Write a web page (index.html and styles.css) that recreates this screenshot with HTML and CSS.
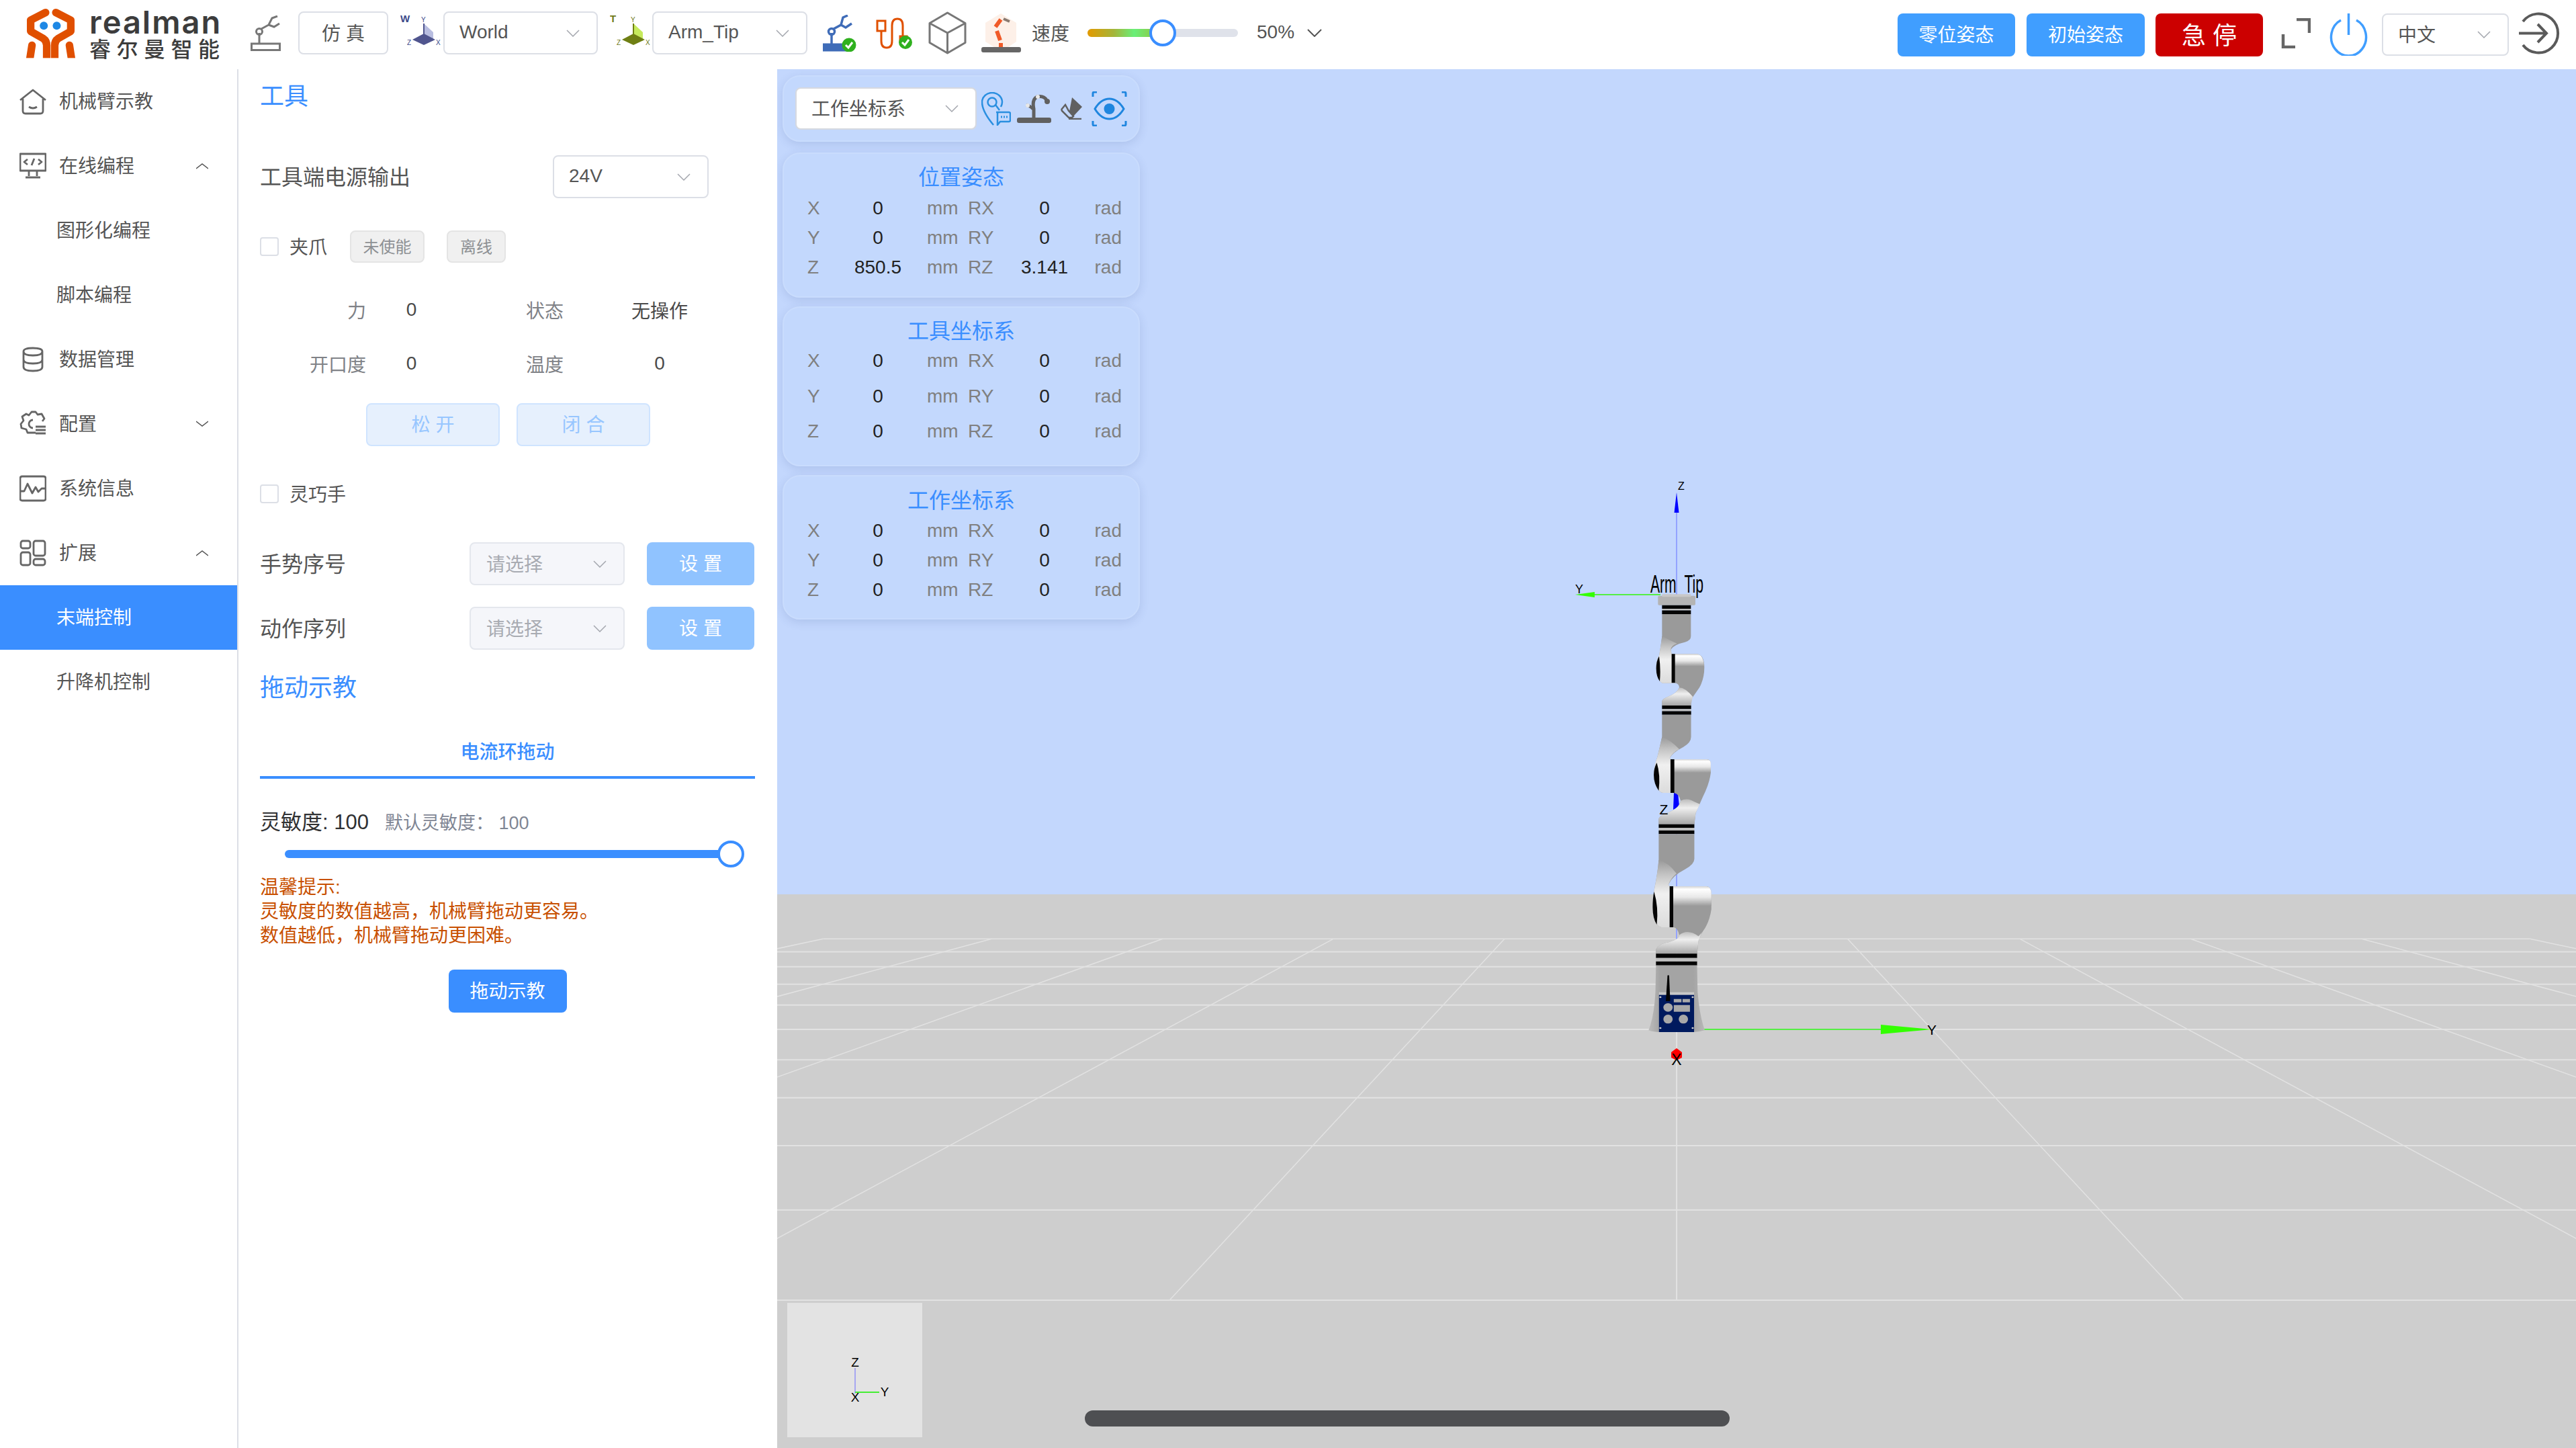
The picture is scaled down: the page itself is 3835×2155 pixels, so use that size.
FILE: index.html
```html
<!DOCTYPE html>
<html lang="zh-CN">
<head>
<meta charset="utf-8">
<title>realman</title>
<link rel="stylesheet" href="styles.css">
</head>
<body>
<div class="app">
  <header class="topbar">
    <div class="logo">
      <svg class="logo-mark" viewBox="40 15 250 232" width="83" height="77">
        <g class="logo-stroke">
          <path d="M145 38L78 72V122L135 155Q150 165 150 185V262"/>
          <path d="M191 38L258 72V122L201 155Q186 165 186 185V262"/>
          <path d="M84 185L72 262"/>
          <path d="M252 185L264 262"/>
        </g>
        <circle class="logo-eye" cx="137" cy="97" r="18"/>
        <circle class="logo-eye" cx="195" cy="97" r="18"/>
        <rect class="logo-cut" x="30" y="242" width="270" height="30"/>
      </svg>
      <div class="logo-text">
        <span class="logo-en">realman</span>
        <span class="logo-cn">睿尔曼智能</span>
      </div>
    </div>

    <svg class="ml45" width="45" height="53" viewBox="0 0 45 53"><g class="ico-gray"><rect x="1.5" y="42" width="42" height="9.5"/><path d="M13 26V42"/><circle cx="13" cy="24" r="4.5"/><path d="M16 20L27 14L32 4L40 1M27 14L35 17L43 12"/></g></svg>
    <div class="select select-sim ml26"><span>仿 真</span></div>

    <svg class="ml18 frame-ico" width="61" height="53" viewBox="0 -3 61 53"><text class="frame-letter navy" x="0" y="12">W</text><path class="f-light" d="M35 14L49 27V40L35 32Z"/><path class="f-navy" d="M35 29L52 38L35 46L18 38Z"/><path class="line-navy" d="M35 14V32"/><text class="frame-axis navy" x="31" y="12">Y</text><text class="frame-axis navy" x="53" y="46">X</text><text class="frame-axis navy" x="10" y="46">Z</text></svg>
    <div class="select select-frame ml3"><span>World</span><svg class="chev" width="20" height="11" viewBox="0 0 20 11"><path d="M1 1L10 10L19 1"/></svg></div>

    <svg class="ml18 frame-ico" width="61" height="53" viewBox="0 -3 61 53"><text class="frame-letter olive" x="0" y="12">T</text><path class="f-lime" d="M35 14L49 27V40L35 32Z"/><path class="f-olive" d="M35 29L52 38L35 46L18 38Z"/><path class="line-olive" d="M35 14V32"/><text class="frame-axis olive" x="31" y="12">Y</text><text class="frame-axis olive" x="53" y="46">X</text><text class="frame-axis olive" x="10" y="46">Z</text></svg>
    <div class="select select-frame select-tip ml2"><span>Arm_Tip</span><svg class="chev" width="20" height="11" viewBox="0 0 20 11"><path d="M1 1L10 10L19 1"/></svg></div>

    <svg class="ml23" width="50" height="55" viewBox="0 0 50 55"><g class="ico-blue"><rect x="1.5" y="44" width="36" height="9"/><path d="M13 27V44"/><circle cx="13" cy="25" r="4.5"/><path d="M16 21L27 15L30 4L37 1M27 15L34 19L43 13"/></g><circle class="ok" cx="39" cy="45" r="10.5"/><path class="ok-tick" d="M34 45L38 49L44 41"/></svg>
    <svg class="ml29" width="55" height="47" viewBox="0 0 55 47"><g class="ico-orange"><rect x="2" y="5" width="12" height="15"/><path d="M8 20V35Q8 45 16 45Q24 45 24 35V12Q24 2 32 2Q40 2 40 12V30"/><rect x="36" y="28" width="10" height="8"/></g><circle class="ok" cx="44" cy="37" r="10"/><path class="ok-tick" d="M39 37L43 41L49 33"/></svg>
    <svg class="ml23" width="57" height="64" viewBox="0 0 57 64"><path class="ico-cube" d="M28.500 2L55 17.500V46.500L28.500 62L2 46.500V17.500ZM2 17.500L28.500 32L55 17.500M28.500 32V62"/></svg>
    <svg class="ml22" width="59" height="58" viewBox="0 0 59 58"><path class="speed-shield" d="M29 0L52 14V42L40 50H19L6 42V14Z"/><g class="speed-arm"><path d="M29 9L21 20"/><path d="M23 26L28 40"/><path d="M29 44V50"/></g><path class="speed-tip" d="M33 8L42 12"/><rect class="speed-base" x="0" y="50" width="59" height="8" rx="3"/></svg>
    <span class="top-text ml16">速度</span>
    <div class="speed ml27"><div class="speed-fill"></div><div class="speed-handle"></div></div>
    <span class="top-text ml28">50%</span>
    <svg class="chev chev-dark ml19" width="22" height="12" viewBox="0 0 22 12"><path d="M1 1L11 11L21 1"/></svg>

    <div class="top-right">
      <button class="btn-top">零位姿态</button>
      <button class="btn-top btn-init">初始姿态</button>
      <button class="btn-stop">急 停</button>
      <svg class="ml26" width="45" height="45" viewBox="0 0 45 45"><path class="ico-expand" d="M24 2H43V22M4 24V43H22"/></svg>
      <svg class="ml28 nudge" width="57" height="63" viewBox="0 0 57 63"><path class="ico-power" d="M17 10A26 28 0 1 0 40 10M28.500 0V32"/></svg>
      <div class="select select-lang ml21 nudge"><span>中文</span><svg class="chev" width="20" height="11" viewBox="0 0 20 11"><path d="M1 1L10 10L19 1"/></svg></div>
      <svg class="ml13" width="63" height="63" viewBox="0 0 63 63"><path class="ico-logout" d="M8 14A29 29 0 1 1 8 49M2 31.500H42M30 18L43 31.500L30 45"/></svg>
    </div>
  </header>

  <div class="main">
    <nav class="sidebar">
      <a class="nav-item"><svg class="nav-ico" viewBox="0 0 40 40"><path d="M1 18L20 3L39 18M5 16V34Q5 38 9 38H31Q35 38 35 34V16M14 28Q20 32 26 28"/></svg><span>机械臂示教</span></a>
      <a class="nav-item"><svg class="nav-ico" viewBox="0 0 40 40"><path d="M1 2H39V27H1ZM12 10L7 14L12 18M28 10L33 14L28 18M22 9L18 19M14 27V35M26 27V35M9 37H31"/></svg><span>在线编程</span><svg class="nav-arrow" viewBox="0 0 18 10"><path d="M0 9L9 2L18 9"/></svg></a>
      <a class="nav-item nav-sub"><span>图形化编程</span></a>
      <a class="nav-item nav-sub"><span>脚本编程</span></a>
      <a class="nav-item"><svg class="nav-ico" viewBox="0 0 40 40"><path d="M6 8Q6 3 20 3Q34 3 34 8V31Q34 37 20 37Q6 37 6 31ZM6 8Q6 14 20 14Q34 14 34 8M6 20Q6 26 20 26Q34 26 34 20"/></svg><span>数据管理</span></a>
      <a class="nav-item"><svg class="nav-ico" viewBox="0 0 40 40"><path d="M24 33H12L10 28L3 26L2 20L6 15L4 9L10 5L14 7L18 2H24L27 6L33 5L37 12L34 16M20 14A6 6 0 1 0 20 26M24 24H39M24 29H39M24 34H39"/></svg><span>配置</span><svg class="nav-arrow" viewBox="0 0 18 10"><path d="M0 1L9 8L18 1"/></svg></a>
      <a class="nav-item"><svg class="nav-ico" viewBox="0 0 40 40"><path d="M4 2H36Q39 2 39 5V35Q39 38 36 38H4Q1 38 1 35V5Q1 2 4 2ZM1 24H7L12 13L19 27L24 18L28 25L33 20H39"/></svg><span>系统信息</span></a>
      <a class="nav-item"><svg class="nav-ico" viewBox="0 0 40 40"><rect x="2" y="2" width="14" height="11" rx="3"/><rect x="2" y="19" width="14" height="19" rx="3"/><rect x="21" y="2" width="17" height="22" rx="3"/><rect x="21" y="29" width="17" height="9" rx="3"/></svg><span>扩展</span><svg class="nav-arrow" viewBox="0 0 18 10"><path d="M0 9L9 2L18 9"/></svg></a>
      <a class="nav-item nav-sub nav-active"><span>末端控制</span></a>
      <a class="nav-item nav-sub"><span>升降机控制</span></a>
    </nav>

    <section class="panel">
      <h2 class="section-title title-tool">工具</h2>
      <div class="row-power">
        <span class="row-label">工具端电源输出</span>
        <div class="select select-power"><span>24V</span><svg class="chev" width="20" height="11" viewBox="0 0 20 11"><path d="M1 1L10 10L19 1"/></svg></div>
      </div>
      <div class="row-check row-gripper">
        <span class="checkbox"></span><span class="check-label">夹爪</span>
        <span class="tag tag-a">未使能</span><span class="tag tag-b">离线</span>
      </div>
      <div class="info-grid">
        <span class="info-label">力</span><span class="info-value">0</span><span class="info-label2">状态</span><span class="info-value">无操作</span>
        <span class="info-label">开口度</span><span class="info-value">0</span><span class="info-label2">温度</span><span class="info-value">0</span>
      </div>
      <div class="row-actions">
        <button class="btn-light">松 开</button>
        <button class="btn-light">闭 合</button>
      </div>
      <div class="row-check row-hand">
        <span class="checkbox"></span><span class="check-label">灵巧手</span>
      </div>
      <div class="row-set row-set-first">
        <span class="row-label set-label">手势序号</span>
        <div class="select select-off"><span>请选择</span><svg class="chev" width="20" height="11" viewBox="0 0 20 11"><path d="M1 1L10 10L19 1"/></svg></div>
        <button class="btn-set">设 置</button>
      </div>
      <div class="row-set">
        <span class="row-label set-label">动作序列</span>
        <div class="select select-off"><span>请选择</span><svg class="chev" width="20" height="11" viewBox="0 0 20 11"><path d="M1 1L10 10L19 1"/></svg></div>
        <button class="btn-set">设 置</button>
      </div>
      <h2 class="section-title title-drag">拖动示教</h2>
      <div class="tab">电流环拖动</div>
      <div class="sense"><span class="sense-main">灵敏度: 100</span><span class="sense-default">默认灵敏度： 100</span></div>
      <div class="sense-slider"><div class="sense-track"><div class="sense-handle"></div></div></div>
      <p class="tips">温馨提示:<br>灵敏度的数值越高，机械臂拖动更容易。<br>数值越低，机械臂拖动更困难。</p>
      <div class="drag-wrap"><button class="btn-drag">拖动示教</button></div>
    </section>

    <section class="view">
      <svg class="scene" width="2678" height="2052" viewBox="1157 103 2678 2052">
        <defs>
          <linearGradient id="jt" x1="0" y1="0" x2="0" y2="1"><stop offset="0" stop-color="#d4d4d4"/><stop offset=".15" stop-color="#fff"/><stop offset=".55" stop-color="#e8e8e8"/><stop offset="1" stop-color="#9a9a9a"/></linearGradient>
          <linearGradient id="jl" x1="0" y1="0" x2="0" y2="1"><stop offset="0" stop-color="#9a9a9a"/><stop offset=".22" stop-color="#c4c4c4"/><stop offset=".5" stop-color="#f0f0f0"/><stop offset="1" stop-color="#dcdcdc"/></linearGradient>
          <linearGradient id="sh" x1="0" y1="0" x2="0" y2="1"><stop offset="0" stop-color="#bcbcbc"/><stop offset=".35" stop-color="#efefef"/><stop offset="1" stop-color="#a6a6a6"/></linearGradient>
          <linearGradient id="bs" x1="0" y1="0" x2="1" y2="0"><stop offset="0" stop-color="#bcbcbc"/><stop offset=".2" stop-color="#a4a4a4"/><stop offset=".8" stop-color="#a4a4a4"/><stop offset="1" stop-color="#b8b8b8"/></linearGradient>
        </defs>
        <rect class="sky" x="1157" y="103" width="2678" height="1228"/>
        <rect class="ground" x="1157" y="1331" width="2678" height="824"/>
        <g transform="translate(1157 1320) scale(1.708 .5325)">
          <g class="grid-h">
            <path class="grid-far" d="M40 145H1528"/>
            <path d="M0 181H1568M0 223H1568M0 272H1568M0 330H1568M0 398H1568M0 483H1568M0 589H1568M0 723H1568M0 903H1568M0 1155H1568"/>
          </g>
          <path class="grid-v" d="M40 145L-1426 1155M187 145L-984 1155M336 145L-542 1155M485 145L-100 1155M634 145L342 1155M933 145L1226 1155M1083 145L1668 1155M1232 145L2110 1155M1381 145L2552 1155M1528 145L2994 1155"/>
          <path class="grid-c" d="M784 145V1155"/>
        </g>

        <path class="axis-z" d="M2496 763V885M2496 1130V1400"/>
        <path class="axis-b" d="M2496 733L2499.500 763H2492.500Z"/>
        <path class="axis-y" d="M2374 885H2472"/>
        <path class="axis-g" d="M2345 885L2374 881V889Z"/>
        <path class="axis-y" d="M2530 1532H2800"/>
        <path class="axis-g" d="M2800 1525L2876 1532L2800 1539Z"/>
        <path class="axis-r" d="M2496 1560L2504 1566V1574L2496 1578L2488 1574V1566Z"/>
        <path class="axis-b" d="M2492 1180H2498L2500 1200L2491 1205Z"/>

        <text class="tip-label" x="2457" y="882" textLength="79" lengthAdjust="spacingAndGlyphs">Arm_Tip</text>

        <g transform="translate(2300 690) scale(.33333)">
          <rect class="r-flange" x="505" y="590" width="167" height="42" rx="5"/>
          <rect class="r-collar" x="523" y="583" width="129" height="12" rx="3"/>
          <path class="r-band" d="M523 632H652V648H523ZM523 655H652V672H523Z"/>
          <path class="r-light" d="M523 648H652V655H523Z"/>
          <path class="r-body" d="M523 672H652V770Q652 790 625 797Q575 808 562 830L566 850H680Q712 855 712 910Q712 960 690 1000L655 1050L652 1080H523V1060Q525 1050 550 1040Q590 1025 600 1000Q600 985 585 980H525Q505 975 497 910Q500 870 510 858Q520 800 523 770Z"/>
          <path fill="url(#jt)" d="M566 850H680Q708 855 711 905H566Z"/>
          <path fill="url(#jl)" d="M510 858Q518 810 523 770Q560 790 590 803Q565 810 562 830L566 850V980H525Q505 975 497 910Q500 870 510 858Z"/>
          <path fill="url(#sh)" d="M523 1060Q525 1050 550 1040Q590 1025 600 1000Q625 1000 660 1040L652 1080H523Z"/>
          <path class="r-band" d="M566 850H581V978H566ZM510 860Q497 880 497 915Q497 950 513 972Q518 915 510 860ZM523 1080H653V1096H523ZM523 1105H653V1121H523Z"/>
          <path class="r-light" d="M523 1096H653V1105H523Z"/>
        </g>

        <g transform="translate(2300 1130) scale(.40816 .33333)">
          <path class="r-body" d="M427 -199H533V-100Q533 -75 505 -55Q465 -30 455 -5L460 0H590Q605 0 605 20V60Q600 110 575 170L550 240L545 290H415V265Q420 250 445 240Q490 220 495 185Q490 155 470 150H430Q405 145 397 70Q400 20 410 -10Q420 -60 427 -100Z"/>
          <path fill="url(#jt)" d="M460 0H590Q605 0 605 20V60H460Z"/>
          <path fill="url(#jl)" d="M410 -10Q420 -60 427 -100Q460 -85 490 -45Q465 -30 455 -5L460 0V150H430Q405 145 397 70Q400 20 410 -10Z"/>
          <path fill="url(#sh)" d="M415 290V265Q420 250 445 240Q490 220 495 185Q520 170 545 190L565 200L550 240L545 290Z"/>
          <path class="r-band" d="M458 0H472V150H458ZM408 15Q397 40 397 70Q397 110 415 140Q422 70 408 15ZM415 290H545V306H415ZM415 318H545V334H415Z"/>
          <path class="r-light" d="M415 306H545V318H415Z"/>

          <path class="r-body" d="M415 334H545V445Q545 470 510 492Q465 520 450 560L455 567H590Q607 570 607 600V670Q600 730 575 770L560 810L555 868H405V850Q410 830 440 820Q490 805 490 785Q485 755 470 750H425Q398 745 393 660Q395 600 400 575Q412 500 415 450Z"/>
          <path fill="url(#jt)" d="M455 567H590Q607 570 607 600V655H455Z"/>
          <path fill="url(#jl)" d="M400 575Q412 500 415 450Q450 460 480 510Q460 530 450 560L455 567V750H425Q398 745 393 660Q395 600 400 575Z"/>
          <path fill="url(#sh)" d="M405 868V850Q410 830 440 820Q490 805 490 785Q520 755 560 790L575 770L560 810L555 868Z"/>
          <path class="r-band" d="M455 567H468V750H455ZM398 590Q393 620 393 660Q393 710 408 738Q415 660 398 590ZM405 868H555V887H405ZM405 902H555V920H405Z"/>
          <path class="r-light" d="M405 887H555V902H405Z"/>

          <path fill="url(#bs)" d="M405 920H555L557 1040Q565 1150 583 1210Q560 1218 540 1218H420Q395 1218 378 1210Q398 1150 403 1040Z"/>
          <rect class="r-strip" x="416" y="1040" width="128" height="14"/>
          <rect class="r-panel" x="416" y="1052" width="128" height="166"/>
          <path class="r-band" d="M447 965Q450 962 453 965L457 1080H441Z"/>
          <path class="r-item" d="M470 1070H498V1085H470ZM502 1070H529V1085H502ZM470 1097H529V1127H470Z"/>
          <ellipse class="r-item" cx="449" cy="1108" rx="17" ry="19"/>
          <ellipse class="r-item" cx="449" cy="1160" rx="17" ry="20"/>
          <ellipse class="r-item" cx="505" cy="1160" rx="17" ry="20"/>
          <g class="r-dot"><circle cx="421" cy="1062" r="4"/><circle cx="539" cy="1062" r="4"/><circle cx="421" cy="1200" r="4"/><circle cx="539" cy="1200" r="4"/></g>
        </g>

        <text class="axis-label small" x="2503" y="729">Z</text>
        <text class="axis-label wide" x="2351" y="883">Y</text>
        <text class="axis-label" x="2477" y="1212">Z</text>
        <text class="axis-label" x="2876" y="1540">Y</text>
        <text class="axis-label big" x="2496" y="1585">X</text>

        <rect class="mini" x="1172" y="1939" width="201" height="200"/>
        <path class="mini-z" d="M1273 2036V2074"/>
        <path class="mini-y" d="M1273 2072H1309"/>
        <text class="mini-label" x="1273" y="2034">Z</text>
        <text class="mini-label" x="1317" y="2078">Y</text>
        <text class="mini-label" x="1273" y="2086">X</text>
      </svg>

      <div class="overlay">
        <div class="card card-tools">
          <div class="select select-coord"><span>工作坐标系</span><svg class="chev" width="20" height="11" viewBox="0 0 20 11"><path d="M1 1L10 10L19 1"/></svg></div>
          <svg class="ml7" width="44" height="50" viewBox="0 0 44 50"><path class="ico-pin" d="M18 49C8 37 1 25 1 15C1 7 8 1 16 1C24 1 31 7 31 15Q31 18 29 22M21 19L27 27M22 30H41Q43 30 43 32V42Q43 44 41 44H28L24 49V32Q24 30 26 30"/><circle class="ico-pin" cx="16" cy="15" r="6.500"/><path class="ico-pin-dots" d="M29 37H31M33 37H35M37 37H39"/></svg>
          <svg class="ml9" width="51" height="43" viewBox="0 0 51 43"><rect class="r-dark" x="0" y="35" width="51" height="8" rx="3"/><path class="ico-robot" d="M25 35V22Q22 8 30 4Q40 2 44 9"/><path class="ico-robot" d="M14 16Q20 18 24 22"/><g class="r-node"><circle cx="16" cy="17" r="3"/><circle cx="31" cy="4" r="3"/></g><circle class="r-dark" cx="45" cy="11" r="4"/></svg>
          <svg class="ml14" width="32" height="33" viewBox="0 0 32 33"><path class="r-dark" d="M17 0L32 14L19 28L13 21Z"/><path class="eraser-low" d="M12 20L19 28L17 30H12L2 20Q1 18 2 17L7 11Z"/><path class="eraser-line" d="M12 32H31"/></svg>
          <svg class="ml14" width="53" height="52" viewBox="0 0 53 52"><path class="ico-scan" d="M2 8V3Q2 1 4 1H8M45 1H49Q51 1 51 3V8M51 44V49Q51 51 49 51H45M8 51H4Q2 51 2 49V44"/><path class="ico-scan" d="M5 26Q14 11 26.500 11Q39 11 48 26Q39 41 26.500 41Q14 41 5 26Z"/><circle class="scan-dot" cx="26.500" cy="26" r="8"/></svg>
        </div>

        <div class="card card-pos">
          <h3 class="card-title">位置姿态</h3>
          <div class="coord rows-a">
            <span class="c-name">X</span><b class="c-val">0</b><span class="c-unit">mm</span><span class="c-name">RX</span><b class="c-val">0</b><span class="c-rad">rad</span>
            <span class="c-name">Y</span><b class="c-val">0</b><span class="c-unit">mm</span><span class="c-name">RY</span><b class="c-val">0</b><span class="c-rad">rad</span>
            <span class="c-name">Z</span><b class="c-val">850.5</b><span class="c-unit">mm</span><span class="c-name">RZ</span><b class="c-val">3.141</b><span class="c-rad">rad</span>
          </div>
        </div>
        <div class="card card-tool">
          <h3 class="card-title">工具坐标系</h3>
          <div class="coord rows-b">
            <span class="c-name">X</span><b class="c-val">0</b><span class="c-unit">mm</span><span class="c-name">RX</span><b class="c-val">0</b><span class="c-rad">rad</span>
            <span class="c-name">Y</span><b class="c-val">0</b><span class="c-unit">mm</span><span class="c-name">RY</span><b class="c-val">0</b><span class="c-rad">rad</span>
            <span class="c-name">Z</span><b class="c-val">0</b><span class="c-unit">mm</span><span class="c-name">RZ</span><b class="c-val">0</b><span class="c-rad">rad</span>
          </div>
        </div>
        <div class="card card-work">
          <h3 class="card-title">工作坐标系</h3>
          <div class="coord rows-c">
            <span class="c-name">X</span><b class="c-val">0</b><span class="c-unit">mm</span><span class="c-name">RX</span><b class="c-val">0</b><span class="c-rad">rad</span>
            <span class="c-name">Y</span><b class="c-val">0</b><span class="c-unit">mm</span><span class="c-name">RY</span><b class="c-val">0</b><span class="c-rad">rad</span>
            <span class="c-name">Z</span><b class="c-val">0</b><span class="c-unit">mm</span><span class="c-name">RZ</span><b class="c-val">0</b><span class="c-rad">rad</span>
          </div>
        </div>
      </div>

      <div class="h-scroll"></div>
    </section>
  </div>
</div>
</body>
</html>
```
FILE: styles.css
```css
* { box-sizing: border-box; }
html, body { margin: 0; padding: 0; background: #fff; }
body {
  width: 3835px; height: 2155px; overflow: hidden;
  font-family: "Liberation Sans", "Noto Sans CJK SC", sans-serif;
  font-size: 28px; color: #555;
}
.app { display: flex; flex-direction: column; height: 2155px; }
button { font-family: inherit; border: 0; padding: 0 0 4px; cursor: pointer; }
h2, h3, p { margin: 0; font-weight: 400; }
svg { display: block; flex: none; }

.ml2 { margin-left: 2px; } .ml3 { margin-left: 3px; } .ml7 { margin-left: 7px; } .ml9 { margin-left: 9px; }
.ml13 { margin-left: 13px; } .ml14 { margin-left: 14px; } .ml16 { margin-left: 16px; } .ml18 { margin-left: 18px; }
.ml19 { margin-left: 19px; } .ml21 { margin-left: 21px; } .ml22 { margin-left: 22px; } .ml23 { margin-left: 23px; }
.ml26 { margin-left: 26px; } .ml27 { margin-left: 27px; } .ml28 { margin-left: 28px; } .ml29 { margin-left: 29px; }
.ml45 { margin-left: 45px; }

/* top bar */
.topbar { height: 103px; flex: none; display: flex; align-items: center; padding: 0 24px 5px 33px; background: #fff; }
.logo { display: flex; align-items: center; gap: 17px; width: 295px; }
.logo-stroke path { fill: none; stroke: #e04f00; stroke-width: 34; stroke-linejoin: round; stroke-linecap: round; }
.logo-eye { fill: #1e88e5; }
.logo-cut { fill: #fff; }
.logo-text { display: flex; flex-direction: column; color: #3c3c3c; }
.logo-en { font-family: Inter, sans-serif; font-size: 47px; font-weight: 600; line-height: 42px; letter-spacing: 2px; height: 43px; white-space: nowrap; }
.logo-cn { font-family: "Noto Sans CJK SC", sans-serif; font-size: 32px; font-weight: 500; line-height: 32px; letter-spacing: 8.500px; white-space: nowrap; }
.frame-ico { margin-bottom: 9px; }

.select {
  height: 64px; display: flex; align-items: center; justify-content: space-between;
  padding: 0 25px 0 22px; background: #fff; border: 2px solid #dcdfe6; border-radius: 8px;
  color: #555; font-size: 28px; flex: none; white-space: nowrap;
}
.select span { margin-bottom: 3px; }
.select-sim { width: 134px; justify-content: center; padding: 0; }
.select-frame { width: 230px; }
.select-tip { width: 231px; }
.select-lang { width: 189px; height: 63px; }
.select-power { width: 232px; }
.select-off { width: 231px; background: #f5f6fa; border-color: #e4e7ed; color: #a8abb2; padding-left: 23px; }
.select-coord { width: 270px; height: 63px; border-color: #d6d9e0; }
.chev { fill: none; }
.chev path { fill: none; stroke: #a4a7ae; stroke-width: 1.500; }
.chev-dark path { stroke: #555; stroke-width: 2; }

.ico-gray * { fill: none; stroke: #777; stroke-width: 3; }
.ico-blue * { fill: none; stroke: #3f6cb8; stroke-width: 3.500; }
.ico-blue rect { stroke-width: 3; fill: #3f6cb8; }
.ico-orange * { fill: none; stroke: #e05000; stroke-width: 3; }
.ok { fill: #2fb01e; }
.ok-tick { fill: none; stroke: #fff; stroke-width: 3; }
.ico-cube { fill: none; stroke: #777; stroke-width: 3; stroke-linejoin: round; }
.speed-shield { fill: #fdf0e8; }
.speed-arm path { fill: none; stroke: #f05a28; stroke-width: 6; }
.speed-tip { fill: none; stroke: #8a7a70; stroke-width: 4; }
.speed-base { fill: #666; }
.frame-letter { font-size: 15px; font-weight: 700; }
.frame-axis { font-size: 10px; }
.navy { fill: #3c4a8a; } .olive { fill: #6f7a1a; }
.f-light { fill: #b8bde0; } .f-navy { fill: #50558e; }
.f-lime { fill: #c6ea5c; } .f-olive { fill: #6f7f14; }
.line-navy { stroke: #50558e; stroke-width: 2; fill: none; }
.line-olive { stroke: #6f7f14; stroke-width: 2; fill: none; }

.top-text { font-size: 28px; color: #555; white-space: nowrap; margin-bottom: 2px; }
.speed { position: relative; width: 224px; height: 12px; background: #dfe2ea; border-radius: 6px; flex: none; }
.speed-fill { width: 112px; height: 12px; border-radius: 6px 0 0 6px; background: linear-gradient(90deg, #e39a00 0%, #a4b53a 35%, #69ef78 62%, #9dbb33 100%); }
.speed-handle { position: absolute; left: 92px; top: -14px; width: 40px; height: 40px; border-radius: 50%; background: #fff; border: 4px solid #3a8eff; }

.top-right { margin-left: auto; display: flex; align-items: center; }
.btn-top { width: 175px; height: 64px; margin-top: 6px; background: #409eff; color: #fff; font-size: 28px; border-radius: 8px; }
.btn-init { width: 176px; margin-left: 17px; }
.btn-stop { width: 160px; height: 64px; margin: 6px 0 0 16px; background: #cc0000; color: #fff; font-size: 36px; border-radius: 8px; }
.nudge { margin-top: 5px; }
.ico-expand { fill: none; stroke: #666; stroke-width: 4.500; }
.ico-power { fill: none; stroke: #409eff; stroke-width: 3.500; }
.ico-logout { fill: none; stroke: #5a5a5a; stroke-width: 4; }

/* main */
.main { flex: 1; display: flex; min-height: 0; }
.sidebar { width: 355px; flex: none; border-right: 2px solid #dcdfe6; display: flex; flex-direction: column; background: #fff; }
.nav-item { height: 96px; flex: none; display: flex; align-items: center; padding-left: 29px; color: #555; font-size: 28px; position: relative; }
.nav-item span { margin-bottom: 4px; }
.nav-ico { width: 40px; height: 40px; margin-right: 19px; }
.nav-ico path, .nav-ico rect { fill: none; stroke: #666; stroke-width: 2.800; stroke-linejoin: round; }
.nav-arrow { width: 18px; height: 10px; margin-left: auto; margin-right: 43px; }
.nav-arrow path { fill: none; stroke: #555; stroke-width: 1.500; }
.nav-sub { padding-left: 84px; }
.nav-active { background: #3a8eff; color: #fff; }

.panel { width: 802px; flex: none; padding: 15px 33px 0 32px; background: #fff; }
.section-title { color: #3a8eff; font-size: 36px; line-height: 48px; height: 48px; }
.title-tool { margin-top: 2px; margin-bottom: -2px; }
.row-power { display: flex; align-items: center; justify-content: space-between; margin-top: 65px; padding-right: 69px; }
.row-label { font-size: 32px; color: #555; white-space: nowrap; margin-bottom: 5px; }
.row-check { display: flex; align-items: center; height: 48px; }
.row-gripper { margin-top: 48px; }
.row-hand { margin-top: 47px; }
.checkbox { width: 28px; height: 28px; border: 2px solid #dcdfe6; border-radius: 4px; background: #fff; flex: none; }
.check-label { margin-left: 16px; margin-bottom: 3px; color: #555; font-size: 28px; }
.tag { height: 48px; display: flex; align-items: center; justify-content: center; padding-bottom: 3px; background: #f0f0f0; border: 2px solid #e4e4e4; border-radius: 8px; color: #8e9094; font-size: 24px; }
.tag-a { width: 111px; margin-left: 34px; }
.tag-b { width: 88px; margin-left: 33px; }
.info-grid { display: grid; grid-template-columns: 158px 135px 202px 200px; grid-auto-rows: 64px; row-gap: 16px; margin-top: 39px; align-items: center; }
.info-label { text-align: right; color: #808287; margin-bottom: 3px; }
.info-label2 { padding-left: 103px; color: #808287; margin-bottom: 3px; }
.info-value { text-align: center; color: #4a4a4a; margin-bottom: 3px; }
.row-actions { display: flex; gap: 25px; margin-top: 26px; padding-left: 158px; }
.btn-light { width: 199px; height: 64px; background: #e6f0fd; border: 2px solid #cfe4ff; border-radius: 8px; color: #97c6ff; font-size: 28px; }
.row-set { display: flex; align-items: center; margin-top: 32px; }
.row-set-first { margin-top: 48px; }
.set-label { width: 312px; }
.btn-set { width: 160px; height: 64px; margin-left: 33px; background: #90c3ff; color: #fff; font-size: 28px; border-radius: 8px; }
.title-drag { margin-top: 33px; }
.tab { width: 737px; height: 60px; margin-top: 51px; text-align: center; line-height: 41px; color: #3a8eff; font-size: 28px; font-weight: 500; border-bottom: 4px solid #3a8eff; }
.sense { display: flex; align-items: baseline; height: 40px; margin-top: 45px; line-height: 40px; white-space: nowrap; }
.sense-main { color: #303133; font-size: 31px; }
.sense-default { margin-left: 24px; color: #7f8694; font-size: 27px; }
.sense-slider { height: 40px; margin-top: 7px; padding: 14px 0 0 37px; }
.sense-track { position: relative; width: 664px; height: 12px; background: #3a8eff; border-radius: 6px; }
.sense-handle { position: absolute; right: -20px; top: -14px; width: 40px; height: 40px; border-radius: 50%; background: #fff; border: 4px solid #3a8eff; }
.tips { margin-top: 12px; color: #c85000; font-size: 28px; line-height: 36px; white-space: nowrap; }
.drag-wrap { width: 737px; display: flex; justify-content: center; margin-top: 32px; }
.btn-drag { width: 176px; height: 64px; background: #3a8eff; color: #fff; font-size: 28px; border-radius: 8px; }

/* viewport */
.view { flex: 1; position: relative; overflow: hidden; background: #c3d7fd; }
.scene { position: absolute; left: 0; top: 0; }
.sky { fill: #c3d7fd; }
.ground { fill: #cecece; }
.grid-h path { fill: none; stroke: #e2e2e2; stroke-width: 2; vector-effect: non-scaling-stroke; }
.grid-h .grid-far { stroke-width: 1.500; }
.grid-v { fill: none; stroke: #e2e2e2; stroke-width: 1.500; vector-effect: non-scaling-stroke; }
.grid-c { fill: none; stroke: #e2e2e2; stroke-width: 2; vector-effect: non-scaling-stroke; }
.axis-z { stroke: #93a3ff; stroke-width: 2; fill: none; }
.axis-b { fill: #0000ff; }
.axis-y { stroke: #55ee44; stroke-width: 2; fill: none; }
.axis-g { fill: #33ff00; }
.axis-r { fill: #ff0000; }
.tip-label { font-size: 36px; fill: #000; }
.axis-label { font-size: 21px; fill: #000; text-anchor: middle; }
.axis-label.small { font-size: 16px; }
.axis-label.wide { font-size: 18px; }
.axis-label.big { font-size: 23px; }
.r-flange { fill: #b4b4b4; }
.r-collar { fill: #c8c8c8; }
.r-band { fill: #050505; }
.r-light { fill: #bdbdbd; }
.r-body { fill: #9a9a9a; }
.r-strip { fill: #c8c8c8; }
.r-panel { fill: #001a5e; }
.r-item { fill: #a8a8a8; }
.r-dot circle { fill: #d0d0d0; }
.mini { fill: #e3e3e3; }
.mini-z { stroke: #6a6aff; stroke-width: 1; fill: none; }
.mini-y { stroke: #44ee33; stroke-width: 2; fill: none; }
.mini-label { font-size: 19px; fill: #000; text-anchor: middle; }

.overlay { position: absolute; left: 8px; top: 9px; width: 532px; display: flex; flex-direction: column; }
.card { width: 532px; background: #c3d8fd; border: 2px solid #c9dcfd; border-radius: 26px; box-shadow: 0 4px 14px rgba(60, 90, 150, .16); }
.card-tools { height: 99px; display: flex; align-items: center; padding-left: 17px; }
.card-pos { height: 216px; margin-top: 16px; padding: 15px 25px 0 35px; }
.card-tool { height: 238px; margin-top: 13px; padding: 15px 25px 0 35px; }
.card-work { height: 215px; margin-top: 13px; padding: 16px 25px 0 35px; }
.card-title { color: #3a8eff; font-size: 32px; line-height: 40px; height: 40px; text-align: center; margin-right: 10px; }
.coord { display: grid; grid-template-columns: 50px 110px 79px 54px 120px 55px; align-items: center; font-size: 28px; }
.rows-a { grid-auto-rows: 44px; margin-top: 4px; }
.rows-b { grid-auto-rows: 52.500px; margin-top: -2px; }
.rows-c { grid-auto-rows: 44px; margin-top: 3px; }
.c-name { color: #808080; }
.c-val { color: #222; font-weight: 400; text-align: center; }
.c-unit { color: #808080; padding-left: 18px; }
.c-rad { color: #808080; text-align: right; }
.ico-pin { fill: none; stroke: #2a8fe0; stroke-width: 2.500; }
.ico-pin-dots { fill: none; stroke: #2a8fe0; stroke-width: 3; }
.r-dark { fill: #606060; }
.ico-robot { fill: none; stroke: #606060; stroke-width: 5; }
.r-node circle { fill: #e8e8e8; }
.eraser-low { fill: #c3d8fd; stroke: #606060; stroke-width: 2.500; }
.eraser-line { stroke: #606060; stroke-width: 2.500; fill: none; }
.ico-scan { fill: none; stroke: #1f86df; stroke-width: 3; }
.scan-dot { fill: #1f86df; }
.h-scroll { position: absolute; left: 458px; top: 1996px; width: 960px; height: 24px; background: #4e4f52; border-radius: 12px; }
```
